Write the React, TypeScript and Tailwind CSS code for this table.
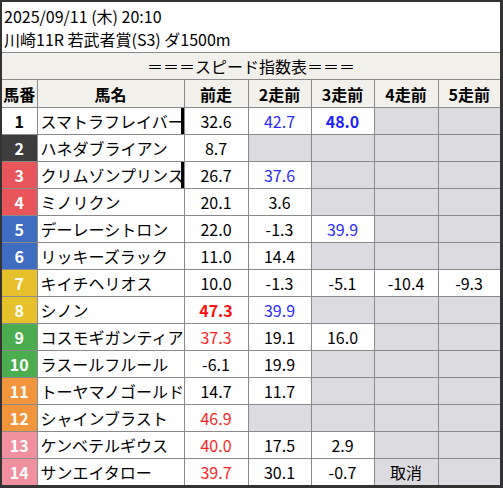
type Cell = string | null
type Row = {
  no: number
  name: string
  overflow?: boolean
  vals: Cell[]
}

// frame colors per horse number
const frame: Record<number, string> = {
  1: "bg-white text-black",
  2: "bg-[#3d3d3d] text-white",
  3: "bg-[#e8555b] text-white",
  4: "bg-[#e8555b] text-white",
  5: "bg-[#3e6dc2] text-white",
  6: "bg-[#3e6dc2] text-white",
  7: "bg-[#e7c12c] text-white",
  8: "bg-[#e7c12c] text-white",
  9: "bg-[#4cad4f] text-white",
  10: "bg-[#4cad4f] text-white",
  11: "bg-[#f0953b] text-white",
  12: "bg-[#f0953b] text-white",
  13: "bg-[#f0909e] text-white",
  14: "bg-[#f0909e] text-white",
}

// prefix: b = blue, B = blue bold, r = red, R = red bold, g = gray text cell
const rows: Row[] = [
  { no: 1, name: "スマトラフレイバー", overflow: true, vals: ["32.6", "b42.7", "B48.0", null, null] },
  { no: 2, name: "ハネダブライアン", vals: ["8.7", null, null, null, null] },
  { no: 3, name: "クリムゾンプリンス", overflow: true, vals: ["26.7", "b37.6", null, null, null] },
  { no: 4, name: "ミノリクン", vals: ["20.1", "3.6", null, null, null] },
  { no: 5, name: "デーレーシトロン", vals: ["22.0", "-1.3", "b39.9", null, null] },
  { no: 6, name: "リッキーズラック", vals: ["11.0", "14.4", null, null, null] },
  { no: 7, name: "キイチヘリオス", vals: ["10.0", "-1.3", "-5.1", "-10.4", "-9.3"] },
  { no: 8, name: "シノン", vals: ["R47.3", "b39.9", null, null, null] },
  { no: 9, name: "コスモギガンティア", vals: ["r37.3", "19.1", "16.0", null, null] },
  { no: 10, name: "ラスールフルール", vals: ["-6.1", "19.9", null, null, null] },
  { no: 11, name: "トーヤマノゴールド", vals: ["14.7", "11.7", null, null, null] },
  { no: 12, name: "シャインブラスト", vals: ["r46.9", null, null, null, null] },
  { no: 13, name: "ケンベテルギウス", vals: ["r40.0", "17.5", "2.9", null, null] },
  { no: 14, name: "サンエイタロー", vals: ["r39.7", "30.1", "-0.7", "g取消", null] },
]

const border = "border border-[#8a8a8a]"

function ValueCell({ v }: { v: Cell }) {
  if (v === null) return <td className={`${border} bg-[#dcdce0]`} />
  let cls = "text-black"
  let text = v
  const p = v[0]
  if (p === "b") { cls = "text-[#2b2bff]"; text = v.slice(1) }
  if (p === "B") { cls = "text-[#1f1fff] font-bold"; text = v.slice(1) }
  if (p === "r") { cls = "text-[#ff1f1f]"; text = v.slice(1) }
  if (p === "R") { cls = "text-[#ff1010] font-bold"; text = v.slice(1) }
  if (p === "g") {
    return <td className={`${border} bg-[#dcdce0] text-center text-black`}>{v.slice(1)}</td>
  }
  return <td className={`${border} bg-white text-center ${cls}`}>{text}</td>
}

export default function App() {
  return (
    <div
      className="w-[503px] h-[488px] bg-white border-t-2 border-l-2 border-r-[3px] border-b-[3px] border-[#333333] text-black text-[16px] overflow-hidden"
      style={{ fontFamily: '"Noto Sans CJK JP", "Noto Sans", sans-serif' }}
    >
      <div className="h-[50px] pl-[2px] pt-[3px] leading-[23px]">
        <div>2025/09/11 (木) 20:10</div>
        <div>川崎11R 若武者賞(S3) ダ1500m</div>
      </div>
      <table className="w-[498px] table-fixed border-collapse">
        <colgroup>
          <col className="w-[35px]" />
          <col className="w-[147px]" />
          <col className="w-[64px]" />
          <col className="w-[63px]" />
          <col className="w-[63px]" />
          <col className="w-[64px]" />
          <col className="w-[62px]" />
        </colgroup>
        <tbody>
          <tr className="h-[27px] bg-[#f2f0eb]">
            <td colSpan={7} className={`${border} border-l-0 border-r-0 text-center leading-none`}>
              ＝＝＝スピード指数表＝＝＝
            </td>
          </tr>
          <tr className="h-[28px] bg-[#f2f0eb] font-bold">
            <td className={`${border} border-l-0 text-center`}>馬番</td>
            <td className={`${border} text-center`}>馬名</td>
            <td className={`${border} text-center`}>前走</td>
            <td className={`${border} text-center`}>2走前</td>
            <td className={`${border} text-center`}>3走前</td>
            <td className={`${border} text-center`}>4走前</td>
            <td className={`${border} border-r-0 text-center`}>5走前</td>
          </tr>
          {rows.map((r) => (
            <tr key={r.no} className="h-[27px] leading-none">
              <td className={`${border} border-l-0 text-center font-bold ${frame[r.no]}`}>{r.no}</td>
              <td className={`${border} relative bg-white pl-[3px] whitespace-nowrap overflow-hidden`}>
                {r.name}
                {r.overflow && <span className="absolute right-0 top-0 bottom-0 w-[3px] bg-black" />}
              </td>
              {r.vals.map((v, i) => (
                <ValueCell key={i} v={v} />
              ))}
            </tr>
          ))}
        </tbody>
      </table>
    </div>
  )
}
